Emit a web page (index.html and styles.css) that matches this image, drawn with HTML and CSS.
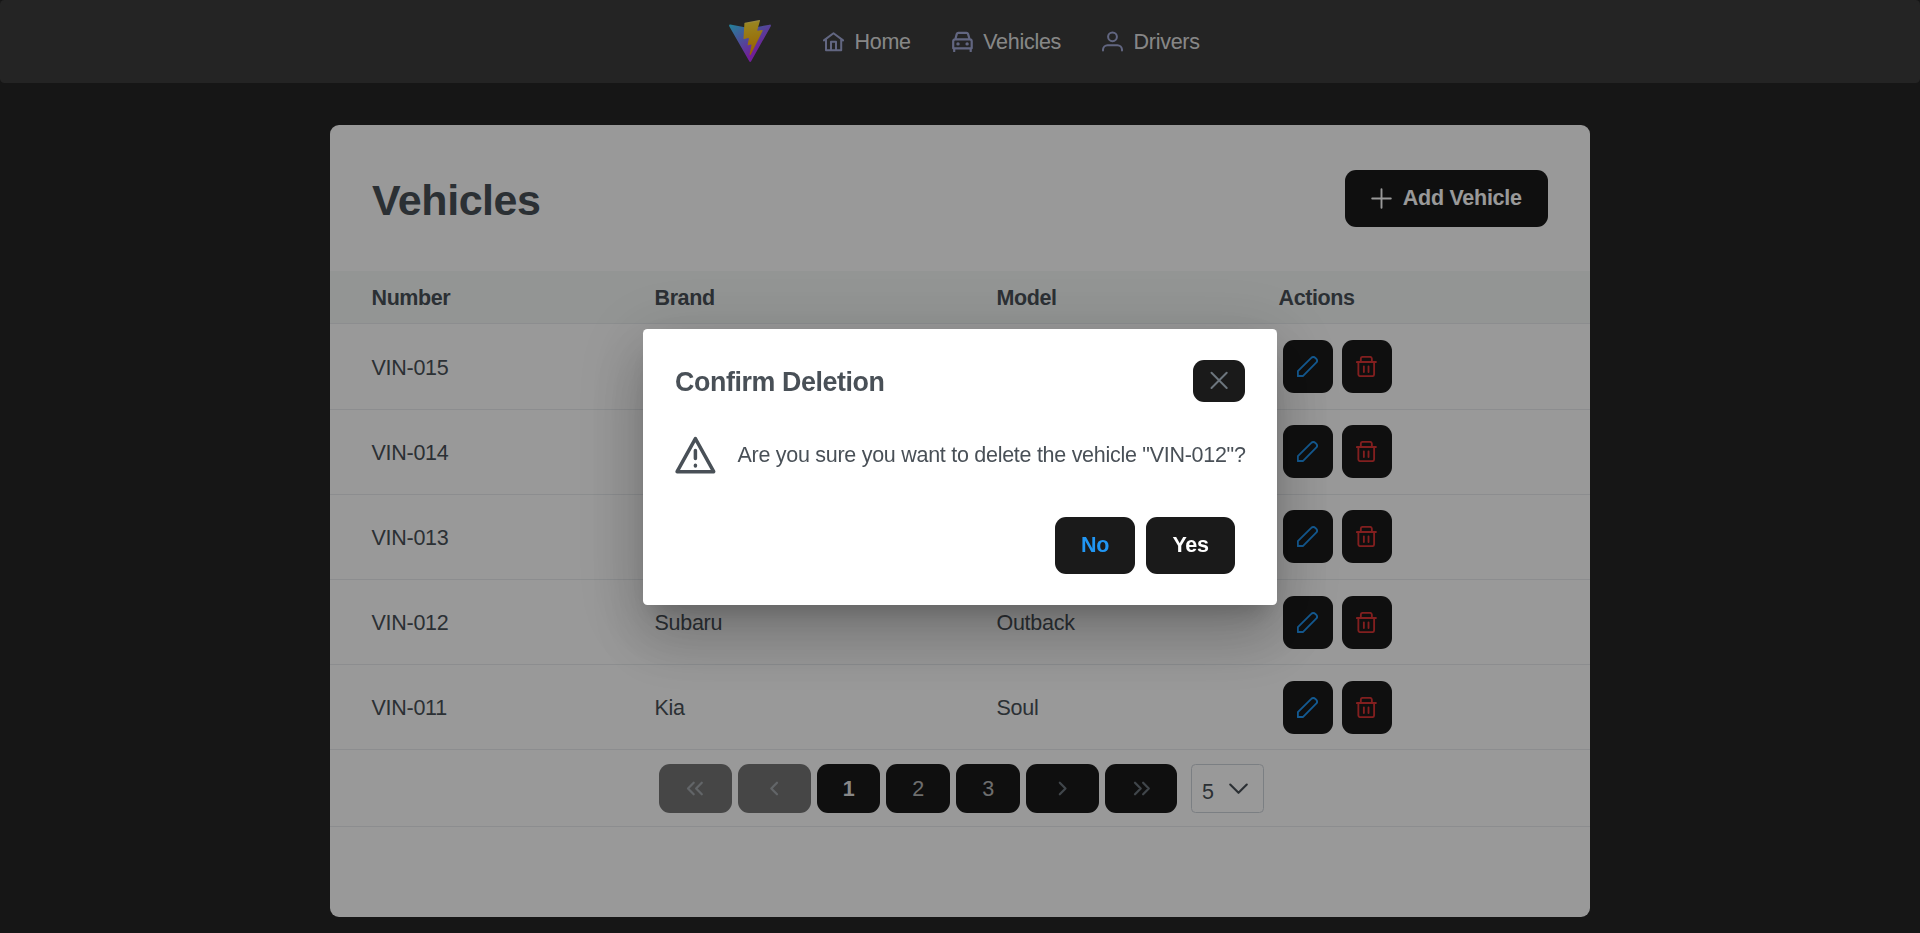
FILE: index.html
```html
<!DOCTYPE html>
<html lang="en">
<head>
<meta charset="utf-8">
<title>Vehicles</title>
<link rel="stylesheet" href="styles.css">
</head>
<body>
<svg width="0" height="0" class="defs" aria-hidden="true">
  <defs>
    <symbol id="pencil" viewBox="0 0 24 24"><path d="M1 22.900V17.200L16.300 2.100a3.200 3.200 0 0 1 4.600 0l1 1a3.200 3.200 0 0 1 0 4.500L6.700 22.900Z"/></symbol>
    <symbol id="trash" viewBox="0 0 24 24"><path d="M1 6.900h21.800M2.700 6.900v14a2.100 2.100 0 0 0 2.100 2.100h13.800a2.100 2.100 0 0 0 2.100-2.100v-14M5.500 6.900V3.200a2.200 2.200 0 0 1 2.200-2.200h8.200a2.200 2.200 0 0 1 2.200 2.200v3.700M9 11.800v6.600M14.300 11.800v6.600"/></symbol>
  </defs>
</svg>

<nav class="menubar">
  <svg class="logo" viewBox="0 0 256 257">
    <defs>
      <linearGradient id="lg1" x1="-.828%" x2="57.636%" y1="7.652%" y2="78.411%"><stop offset="0%" stop-color="#41D1FF"/><stop offset="100%" stop-color="#BD34FE"/></linearGradient>
      <linearGradient id="lg2" x1="43.376%" x2="50.316%" y1="2.242%" y2="89.030%"><stop offset="0%" stop-color="#FFEA83"/><stop offset="8.333%" stop-color="#FFDD35"/><stop offset="100%" stop-color="#FFA800"/></linearGradient>
    </defs>
    <path fill="url(#lg1)" d="M255.153 37.938 134.897 252.976c-2.483 4.440-8.862 4.466-11.382.048L.875 37.958c-2.746-4.814 1.371-10.646 6.827-9.670l120.385 21.517a6.537 6.537 0 0 0 2.322-.004l117.867-21.483c5.438-.991 9.574 4.796 6.877 9.620Z"/>
    <path fill="url(#lg2)" d="M185.432.063 96.440 17.501a3.268 3.268 0 0 0-2.634 3.014l-5.474 92.456a3.268 3.268 0 0 0 3.997 3.378l24.777-5.718c2.318-.535 4.413 1.507 3.936 3.838l-7.361 36.047c-.495 2.426 1.782 4.500 4.151 3.780l15.304-4.649c2.372-.720 4.652 1.360 4.150 3.788l-11.698 56.621c-.732 3.542 3.979 5.473 5.943 2.437l1.313-2.028 72.516-144.720c1.215-2.423-.880-5.186-3.540-4.672l-25.505 4.922c-2.396.462-4.435-1.770-3.759-4.114l16.646-57.705c.677-2.350-1.370-4.583-3.769-4.113Z"/>
  </svg>
  <a class="item"><svg viewBox="0 0 21 21"><path d="M.9 9.400 10.500 2.200l9.600 7.200M3 8.300v11h15.200v-11M8 19.300v-8.500h5v8.500"/></svg>Home</a>
  <a class="item car"><svg viewBox="0 0 21 21"><path d="M3.300 8.300 4.800 2.900a1.600 1.600 0 0 1 1.500-1.100h8.200A1.600 1.600 0 0 1 16 2.900l1.600 5.400M3.200 8.300h14.500a2 2 0 0 1 2 2v7H1.200v-7a2 2 0 0 1 2-2ZM2.200 17.600v2.700M18.700 17.600v2.700"/><circle class="solid" cx="6" cy="12.900" r="1.700"/><circle class="solid" cx="15.100" cy="12.900" r="1.700"/></svg>Vehicles</a>
  <a class="item"><svg viewBox="0 0 21 21"><circle cx="10.500" cy="5.800" r="4.400"/><path d="M1 19.400v-.8a4.600 4.600 0 0 1 4.600-4.300h9.800a4.600 4.600 0 0 1 4.600 4.300v.8"/></svg>Drivers</a>
</nav>

<main class="card">
  <header class="card-head">
    <h1>Vehicles</h1>
    <button class="btn add"><svg viewBox="0 0 21 21"><path d="M10.500 1.200v18.600M1.200 10.500h18.600"/></svg>Add Vehicle</button>
  </header>
  <section class="table">
    <div class="tr th"><span>Number</span><span>Brand</span><span>Model</span><span>Actions</span></div>
    <div class="tr first"><span>VIN-015</span><span></span><span></span><span class="actions"><button class="btn icon edit"><svg><use href="#pencil"/></svg></button><button class="btn icon del"><svg><use href="#trash"/></svg></button></span></div>
    <div class="tr"><span>VIN-014</span><span></span><span></span><span class="actions"><button class="btn icon edit"><svg><use href="#pencil"/></svg></button><button class="btn icon del"><svg><use href="#trash"/></svg></button></span></div>
    <div class="tr"><span>VIN-013</span><span></span><span></span><span class="actions"><button class="btn icon edit"><svg><use href="#pencil"/></svg></button><button class="btn icon del"><svg><use href="#trash"/></svg></button></span></div>
    <div class="tr low"><span>VIN-012</span><span>Subaru</span><span>Outback</span><span class="actions"><button class="btn icon edit"><svg><use href="#pencil"/></svg></button><button class="btn icon del"><svg><use href="#trash"/></svg></button></span></div>
    <div class="tr low"><span>VIN-011</span><span>Kia</span><span>Soul</span><span class="actions"><button class="btn icon edit"><svg><use href="#pencil"/></svg></button><button class="btn icon del"><svg><use href="#trash"/></svg></button></span></div>
  </section>
  <footer class="paginator">
    <button class="btn page wide off"><svg viewBox="0 0 21 21"><path d="M8.700 4.700 3 10.500l5.700 5.800M16.800 4.700l-5.700 5.800 5.700 5.800"/></svg></button>
    <button class="btn page wide off"><svg viewBox="0 0 21 21"><path d="M13 4.700l-5.700 5.800 5.700 5.800"/></svg></button>
    <button class="btn page on">1</button>
    <button class="btn page">2</button>
    <button class="btn page">3</button>
    <button class="btn page wide"><svg viewBox="0 0 21 21"><path d="M7.800 4.700l5.700 5.800-5.700 5.800"/></svg></button>
    <button class="btn page wide last"><svg viewBox="0 0 21 21"><path d="M4 4.700l5.700 5.800L4 16.300M12.100 4.700l5.700 5.800-5.700 5.800"/></svg></button>
    <div class="select"><span>5</span><svg viewBox="0 0 21 21"><path d="M2.200 6.500l8.300 8.300 8.300-8.300"/></svg></div>
  </footer>
</main>

<div class="mask">
  <div class="dialog" role="dialog">
    <div class="dialog-head"><h2>Confirm Deletion</h2><button class="btn close"><svg viewBox="0 0 21 21"><path d="M2.500 2.800l15.200 15.200M17.700 2.800 2.500 18"/></svg></button></div>
    <div class="dialog-body"><svg viewBox="0 0 42 42"><path d="M20.400 4.600 38.700 37.700H2.100Z"/><path class="bang" d="M20.400 16.500v8M20.400 31.200v.8"/></svg><p>Are you sure you want to delete the vehicle "VIN-012"?</p></div>
    <div class="dialog-foot"><button class="btn no">No</button><button class="btn yes">Yes</button></div>
  </div>
</div>
</body>
</html>
```
FILE: styles.css
```css
* { box-sizing: border-box; }
body {
  margin: 0;
  height: 933px;
  overflow: hidden;
  background: #262626;
  color: #495057;
  font: 21.5px/32px "Liberation Sans", Helvetica, Arial, sans-serif;
  letter-spacing: -.28px;
}
svg { fill: none; stroke: currentColor; stroke-linecap: round; stroke-linejoin: round; flex: none; }
h1, h2, p { margin: 0; }
.defs { position: absolute; }

.menubar {
  height: 83px;
  padding: 0 0 1px 729px;
  display: flex;
  align-items: center;
  background: #3c3c3c;
  border-radius: 4.5px;
  color: rgba(255, 255, 255, .87);
}
.logo { width: 42px; height: 42px; stroke: none; margin-right: 52px; }
.item { display: flex; align-items: center; gap: 10.5px; margin-right: 41px; padding-top: 1px; }
.item svg { width: 21px; height: 21px; stroke-width: 2; color: #a3abd8; }
.item.car svg { stroke-width: 2.2; }
.item .solid { fill: currentColor; stroke: none; }

.card {
  width: 1260px;
  height: 792px;
  margin: 42px auto 0;
  background: #fff;
  border-radius: 9px;
}
.card-head {
  height: 146px;
  padding: 0 42px;
  display: flex;
  align-items: center;
  justify-content: space-between;
}
h1 { font-size: 43px; line-height: 46px; letter-spacing: -.45px; padding-top: 3px; }

.btn {
  height: 57px;
  padding: 1px 0 0;
  display: flex;
  align-items: center;
  justify-content: center;
  border: 0;
  border-radius: 11px;
  background: #1a1a1a;
  color: #fff;
  font: bold 21.5px "Liberation Sans", Helvetica, Arial, sans-serif;
  letter-spacing: -.28px;
}
.add { width: 203px; gap: 10.5px; }
.add svg { width: 21px; height: 21px; stroke-width: 1.9; }

.tr {
  height: 85px;
  padding-left: 41.5px;
  display: grid;
  grid-template-columns: 283px 342px 282px 1fr;
  align-items: center;
  border-bottom: 1px solid #e9ecef;
}
.tr > span { padding-top: 2px; }
.th { height: 53px; background: #f5f9f7; font-weight: bold; letter-spacing: -.4px; }
.first { height: 86px; }
.tr > .actions { display: flex; gap: 9px; padding: 0 0 0 4.5px; margin-bottom: 1px; }
.first > .actions { margin-bottom: 0; }
.low > .actions { margin-bottom: -1px; }
.icon { width: 50px; height: 53px; padding: 0 1px 0 0; }
.icon svg { width: 21px; height: 21px; stroke-width: 2.1; overflow: visible; }
.edit { color: #2196f3; }
.del { color: #d93434; }

.paginator {
  height: 77px;
  display: flex;
  align-items: center;
  gap: 6px;
  padding: 1px 0 0 329px;
  border-bottom: 1px solid #e9ecef;
}
.page { width: 64px; height: 49px; font-weight: normal; color: rgba(255, 255, 255, .7); }
.on { width: 63px; font-weight: bold; color: rgba(255, 255, 255, .9); }
.wide { width: 73px; padding: 0; color: #6c757d; }
.last { width: 72px; }
.wide svg { width: 21px; height: 21px; stroke-width: 2.2; }
.off { background: #757575; color: #a4a9ae; }
.select {
  width: 73px;
  height: 49px;
  margin-left: 8px;
  padding: 0 14px 0 10px;
  display: flex;
  align-items: center;
  justify-content: space-between;
  border: 1px solid #ced4da;
  border-radius: 4.5px;
}
.select span { padding-top: 7px; }
.select svg { width: 21px; height: 21px; stroke-width: 2.1; }

.mask {
  position: fixed;
  inset: 0;
  display: flex;
  align-items: center;
  justify-content: center;
  background: rgba(0, 0, 0, .4);
}
.dialog {
  width: 634px;
  height: 276px;
  padding: 31px 32px;
  background: #fff;
  border-radius: 4.5px;
  box-shadow: 0 16.5px 22.5px -10.5px rgba(0, 0, 0, .2), 0 36px 57px 4.5px rgba(0, 0, 0, .14), 0 13.5px 69px 12px rgba(0, 0, 0, .12);
}
.dialog-head { height: 42px; display: flex; align-items: center; justify-content: space-between; }
h2 { font-size: 26.8px; line-height: 40px; letter-spacing: -.4px; padding-top: 2px; }
.close { width: 52px; height: 42px; padding: 0; color: #6c757d; }
.close svg { width: 21px; height: 21px; stroke-width: 2; }
.dialog-body { height: 42px; margin-top: 32px; display: flex; align-items: center; gap: 20.5px; white-space: nowrap; }
.dialog-body svg { width: 42px; height: 42px; stroke-width: 3.5; }
.dialog-foot { margin-top: 41px; padding-right: 10px; display: flex; justify-content: flex-end; gap: 11px; }
.no { width: 80px; color: #2196f3; }
.yes { width: 89px; }
```
